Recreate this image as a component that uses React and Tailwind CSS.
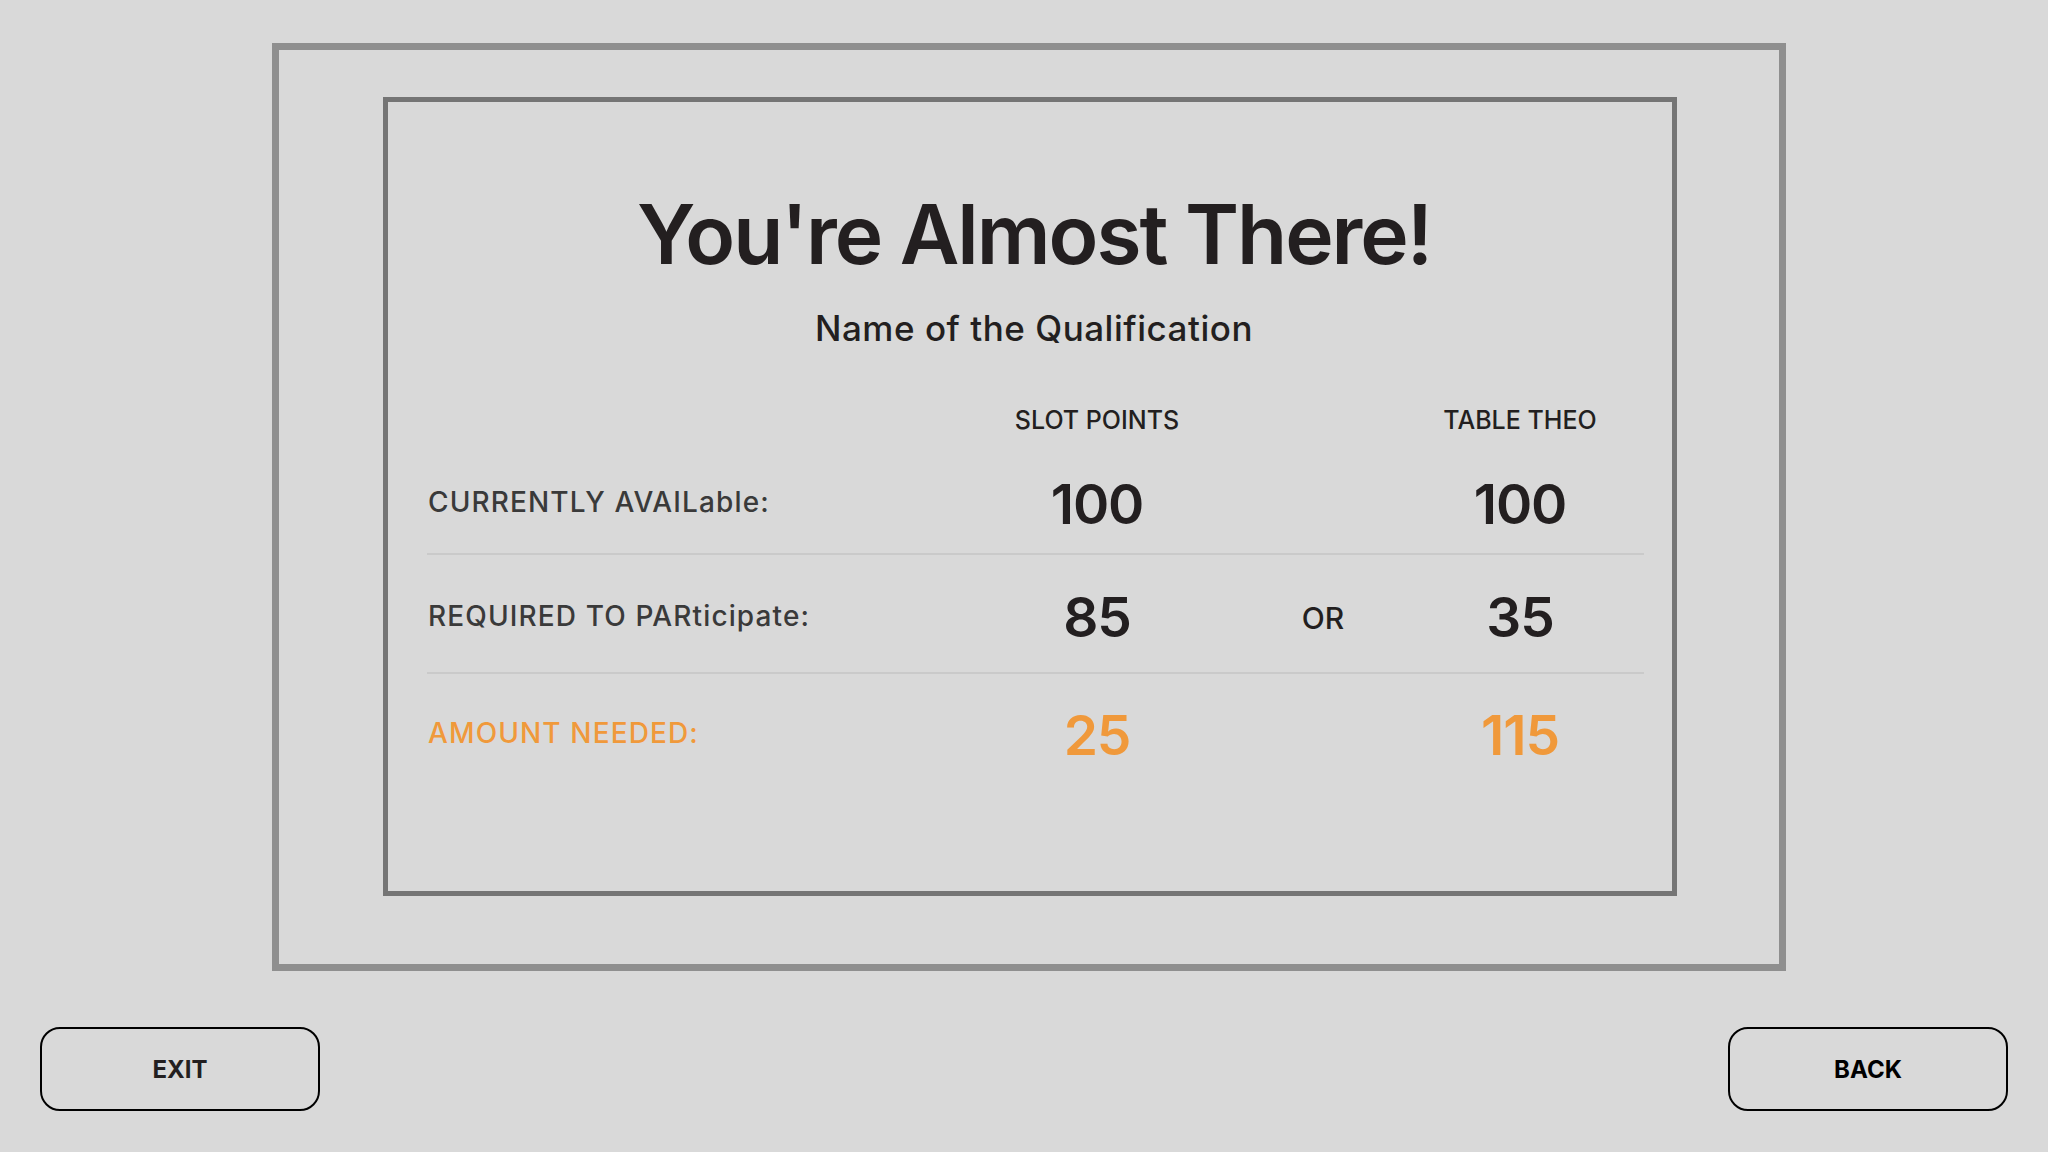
import React from 'react'

const rows = [
  { label: 'CURRENTLY AVAILable:', slot: '100', theo: '100', or: false, accent: false },
  { label: 'REQUIRED TO PARticipate:', slot: '85', theo: '35', or: true, accent: false },
  { label: 'AMOUNT NEEDED:', slot: '25', theo: '115', or: false, accent: true },
]

function Row({ row, last }) {
  const valueColor = row.accent ? 'text-[#f0993b]' : 'text-[#231f20]'
  const labelColor = row.accent ? 'text-[#f0993b]' : 'text-[#3a3a3a]'
  return (
    <div
      className={`grid grid-cols-[560px_220px_232px_162px_1fr] items-center ${
        last ? 'h-[114px]' : 'border-b-2 border-[#cacaca]'
      } ${row.accent ? '' : row.or ? 'h-[119px]' : 'h-[108px]'}`}
    >
      <span className={`pl-px pt-[4px] text-[28px] font-medium tracking-[0.04em] ${labelColor}`}>{row.label}</span>
      <span className={`pt-[8px] text-center text-[55px] leading-none font-semibold tracking-[-0.02em] ${valueColor}`}>{row.slot}</span>
      <span className="pt-[8px] text-center text-[30px] leading-none font-medium text-[#231f20]">{row.or ? 'OR' : ''}</span>
      <span className={`pt-[8px] text-center text-[55px] leading-none font-semibold tracking-[-0.02em] ${valueColor}`}>{row.theo}</span>
      <span></span>
    </div>
  )
}

function App() {
  return (
    <div className="w-[2048px] h-[1152px] bg-[#d9d9d9] flex flex-col font-['Inter','Noto_Sans',sans-serif] overflow-hidden">
      {/* outer frame */}
      <div className="mt-[43px] ml-[272px] w-[1514px] h-[928px] border-[7px] border-[#8f8f8f] pt-[47px] pl-[104px]">
        {/* inner card */}
        <div className="w-[1294px] h-[799px] border-[5px] border-[#757575] flex flex-col">
          <h1 className="mt-[89px] h-[88px] pl-[8px] text-center text-[82px] leading-[88px] font-semibold tracking-[-0.025em] text-[#231f20]">
            You're Almost There!
          </h1>
          <p className="mt-[29px] h-[40px] pl-[8px] text-center text-[35px] leading-[40px] font-medium tracking-[0.015em] text-[#231f20]">
            Name of the Qualification
          </p>

          <div className="ml-[39px] w-[1217px] mt-[57px]">
            <div className="grid grid-cols-[560px_220px_232px_162px_1fr] h-[30px] items-center text-[25px] leading-[30px] font-medium text-[#231f20]">
              <span></span>
              <span className="text-center">SLOT POINTS</span>
              <span></span>
              <span className="text-center">TABLE THEO</span>
              <span></span>
            </div>
            <div className="mt-[12px]">
              {rows.map((row, i) => (
                <Row key={row.label} row={row} last={i === rows.length - 1} />
              ))}
            </div>
          </div>
        </div>
      </div>

      {/* bottom buttons */}
      <div className="mt-[56px] px-[40px] flex justify-between">
        <button className="w-[280px] h-[84px] rounded-[20px] border-2 border-black pt-[2px] text-[24px] font-bold text-[#231f20]">
          EXIT
        </button>
        <button className="w-[280px] h-[84px] rounded-[20px] border-2 border-black pt-[2px] text-[24px] font-bold text-black">
          BACK
        </button>
      </div>
    </div>
  )
}

export default App
